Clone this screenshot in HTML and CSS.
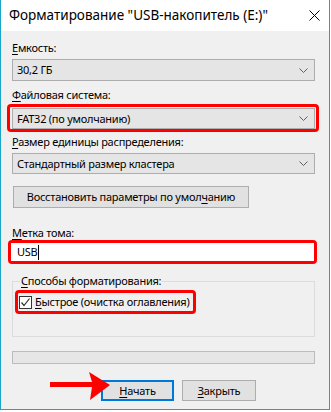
FILE: index.html
```html
<!DOCTYPE html>
<html lang="ru">
<head>
<meta charset="utf-8">
<title>Форматирование</title>
<link rel="stylesheet" href="styles.css">
</head>
<body>
<div class="window">
  <div class="titlebar">
    <span class="title">Форматирование "USB-накопитель (E:)"</span>
    <svg class="close" width="11" height="11" viewBox="0 0 11 11"><path d="M0.5 0.5 L10.5 10.5 M10.5 0.5 L0.5 10.5" stroke="#000" stroke-width="1" fill="none"/></svg>
  </div>
  <div class="content">
    <div class="label l1"><u>Е</u>мкость:</div>
    <div class="combo c1"><span>30,2 ГБ</span><svg class="chev" width="9" height="5" viewBox="0 0 9 5"><polyline points="0.5,0.5 4.5,4.5 8.5,0.5" fill="none" stroke="#606060" stroke-width="1"/></svg></div>

    <div class="label l2"><u>Ф</u>айловая система:</div>
    <div class="hl hl-combo">
      <div class="combo"><span>FAT32 (по умолчанию)</span><svg class="chev" width="9" height="5" viewBox="0 0 9 5"><polyline points="0.5,0.5 4.5,4.5 8.5,0.5" fill="none" stroke="#606060" stroke-width="1"/></svg></div>
    </div>

    <div class="label l3"><u>Р</u>азмер единицы распределения:</div>
    <div class="combo c3"><span>Стандартный размер кластера</span><svg class="chev" width="9" height="5" viewBox="0 0 9 5"><polyline points="0.5,0.5 4.5,4.5 8.5,0.5" fill="none" stroke="#606060" stroke-width="1"/></svg></div>

    <div class="btn restore">Восстановить параметры по умол<u>ч</u>анию</div>

    <div class="label l4"><u>М</u>етка тома:</div>
    <div class="hl hl-input">
      <div class="input"><span>USB</span><span class="caret"></span></div>
    </div>

    <div class="group">
      <div class="legend"><u>С</u>пособы форматирования:</div>
      <div class="hl hl-check">
        <span class="checkbox"><svg width="11" height="11" viewBox="0 0 11 11"><polyline points="1.5,5.5 4,8.5 9.5,1.5" fill="none" stroke="#333" stroke-width="1.2"/></svg></span>
        <span class="check-text"><u>Б</u>ыстрое (очистка оглавления)</span>
      </div>
    </div>

    <div class="progress"></div>

    <div class="actions">
      <div class="btn start"><u>Н</u>ачать</div>
      <div class="btn closebtn"><u>З</u>акрыть</div>
    </div>

    <svg class="arrow" width="70" height="32" viewBox="0 0 70 32">
      <polygon points="0,10 42,10 39,0 60,13 40,28 42,15 0,15" fill="#ff0000"/>
    </svg>
  </div>
</div>
</body>
</html>
```

FILE: styles.css
```css
* { box-sizing: border-box; }
html, body {
  margin: 0;
  padding: 0;
  background: #ffffff;
}
body {
  font-family: "Noto Sans", "Open Sans", sans-serif;
  font-size: 11px;
  letter-spacing: -0.25px;
  color: #000;
}
u {
  text-decoration: underline;
  text-underline-offset: 2px;
  text-decoration-thickness: 1px;
}
.window {
  width: 330px;
  height: 410px;
  border-left: 1px solid #19a4c8;
  border-right: 1px solid #19a4c8;
  border-bottom: 1px solid #19a4c8;
  display: flex;
  flex-direction: column;
}
.titlebar {
  height: 31px;
  background: #ffffff;
  display: flex;
  align-items: center;
  justify-content: space-between;
  padding: 0 9px 0 8px;
}
.title {
  font-size: 13.5px;
  letter-spacing: 0;
  line-height: 18px;
  margin-top: -1px;
}
.close {
  display: block;
  margin-top: -1px;
}
.content {
  flex: 1;
  background: #f0f0f0;
  padding: 0 14px 0 11px;
  position: relative;
}
.label {
  line-height: 16px;
  height: 16px;
}
.l1 { margin-top: 9px; }
.l2 { margin-top: 6px; }
.l3 { margin-top: 2px; }
.l4 { margin-top: 17px; height: 15px; line-height: 15px; }
.combo {
  height: 21px;
  background: #e5e5e5;
  border: 1px solid #adadad;
  display: flex;
  align-items: center;
  justify-content: space-between;
  padding: 0 6px 0 4px;
}
.combo span { line-height: 16px; }
.chev { display: block; }
.c1 { margin-top: 3px; height: 22px; }
.c3 { margin-top: 3px; }
.hl {
  border: 3px solid #ff0000;
  border-radius: 4px;
}
.hl-combo {
  margin: 1px -4px 0 -5px;
  padding: 1px 1px 0 2px;
}
.hl-input {
  margin: 0 -2px 0 -4px;
  height: 24px;
}
.input {
  height: 18px;
  background: #ffffff;
  display: flex;
  align-items: center;
  padding-left: 6px;
}
.input span { line-height: 16px; }
.caret {
  display: inline-block;
  width: 1px;
  height: 15px;
  background: #000;
  margin-left: 1px;
}
.btn {
  height: 22px;
  background: #e1e1e1;
  border: 1px solid #adadad;
  display: flex;
  align-items: center;
  justify-content: center;
  line-height: 16px;
}
.restore {
  margin-top: 12px;
  margin-left: 1px;
  width: 236px;
}
.group {
  margin-top: 17px;
  height: 56px;
  border: 1px solid #dcdcdc;
}
.legend {
  width: fit-content;
  margin: -9px 0 0 7px;
  padding: 0 1px;
  background: #f0f0f0;
  line-height: 15px;
  height: 15px;
}
.hl-check {
  width: fit-content;
  margin: 2px 0 0 2px;
  height: 24px;
  padding: 0 3px 0 1px;
  display: flex;
  align-items: center;
  gap: 3px;
}
.checkbox {
  width: 13px;
  height: 13px;
  border: 1px solid #333333;
  background: #ffffff;
  display: flex;
  align-items: center;
  justify-content: center;
}
.checkbox svg { display: block; }
.check-text { line-height: 16px; }
.progress {
  margin-top: 14px;
  height: 13px;
  background: #e6e6e6;
  border: 1px solid #bcbcbc;
}
.actions {
  margin-top: 16px;
  display: flex;
  gap: 8px;
  padding-left: 89px;
}
.actions .btn {
  height: 21px;
  width: 73px;
}
.start {
  border: 2px solid #0078d7;
}
.closebtn {
  width: 74px !important;
}
.arrow {
  position: absolute;
  left: 49px;
  bottom: 5px;
}
```
